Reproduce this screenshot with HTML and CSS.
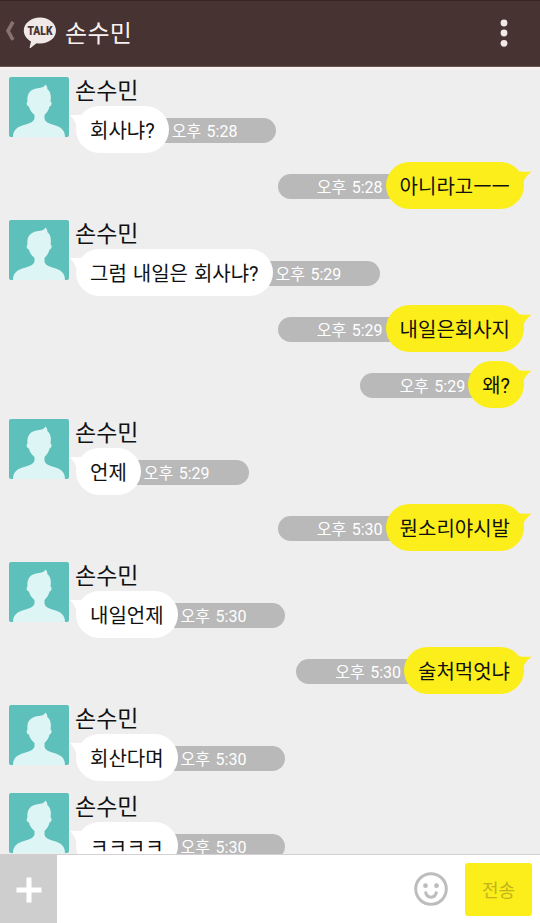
FILE: index.html
```html
<!DOCTYPE html>
<html lang="ko">
<head>
  <meta charset="UTF-8" />
  <title>손수민</title>
  <link rel="stylesheet" href="styles.css">
</head>
<body>

  <!-- shared shapes -->
  <svg width="0" height="0" class="defs">
    <symbol id="person" viewBox="0 0 60 60">
      <path d="M4 60 C4 53 8 50 15 48 C22 46 25.500 44 25.500 41 V38 C22.500 35.500 20.500 32.500 20 29.500 C17.500 29 17 25.500 18.500 24.500 C17.500 16 22 11.500 30 11 C34 10.500 36 9 36.500 7.500 C38 9 38.500 10.500 38.300 12 C41.500 14.500 42.500 19 41.500 24.500 C43.500 25.500 42.500 29 40.500 29.500 C40 32.500 38 35.500 35.500 38 V41 C35.500 44 38 46 45 48 C52 50 56 53 56 60 Z" />
    </symbol>
    <symbol id="tail-left" viewBox="0 0 14 14">
      <path d="M0 1 H14 V14 H7 C6 9 4 5 0 1 Z" />
    </symbol>
    <symbol id="tail-right" viewBox="0 0 16 14">
      <path d="M0 0 C4 2 10 2 15.500 1.500 C12 5 9 7 7.500 12 H0 Z" />
    </symbol>
  </svg>

  <header>
    <svg class="back" width="10" height="20" viewBox="0 0 10 20"><path d="M8 .8 L3 9.800 L8 18.800" /></svg>
    <svg class="logo" width="34" height="32" viewBox="0 0 34 32">
      <path d="M17 .5 C26 .5 33 6.500 33 13.500 C33 21 26 26.500 17 26.500 C15.500 26.500 14.500 26.400 13.500 26.200 L7.500 31 C7 31.300 6.500 31 6.600 30.500 L8 24.500 C3.500 22 .8 18 .8 13.500 C.8 6.500 8 .5 17 .5 Z" />
      <text x="17" y="18" textLength="25" lengthAdjust="spacingAndGlyphs">TALK</text>
    </svg>
    <h1>손수민</h1>
    <svg class="more" width="8" height="28" viewBox="0 0 8 28">
      <circle cx="4" cy="4" r="3.400" /><circle cx="4" cy="14" r="3.400" /><circle cx="4" cy="24.300" r="3.400" />
    </svg>
  </header>

  <main>
    <div class="msg in">
      <div class="avatar"><svg><use href="#person" /></svg></div>
      <div class="content">
        <p class="name">손수민</p>
        <div class="line">
          <div class="bubble">회사냐?<svg class="tail"><use href="#tail-left" /></svg></div>
          <span class="time">오후 5:28</span>
        </div>
      </div>
    </div>

    <div class="msg out">
      <div class="line">
        <span class="time">오후 5:28</span>
        <div class="bubble">아니라고ㅡㅡ<svg class="tail"><use href="#tail-right" /></svg></div>
      </div>
    </div>

    <div class="msg in">
      <div class="avatar"><svg><use href="#person" /></svg></div>
      <div class="content">
        <p class="name">손수민</p>
        <div class="line">
          <div class="bubble">그럼 내일은 회사냐?<svg class="tail"><use href="#tail-left" /></svg></div>
          <span class="time">오후 5:29</span>
        </div>
      </div>
    </div>

    <div class="msg out">
      <div class="line">
        <span class="time">오후 5:29</span>
        <div class="bubble">내일은회사지<svg class="tail"><use href="#tail-right" /></svg></div>
      </div>
    </div>

    <div class="msg out">
      <div class="line">
        <span class="time">오후 5:29</span>
        <div class="bubble">왜?<svg class="tail"><use href="#tail-right" /></svg></div>
      </div>
    </div>

    <div class="msg in">
      <div class="avatar"><svg><use href="#person" /></svg></div>
      <div class="content">
        <p class="name">손수민</p>
        <div class="line">
          <div class="bubble">언제<svg class="tail"><use href="#tail-left" /></svg></div>
          <span class="time">오후 5:29</span>
        </div>
      </div>
    </div>

    <div class="msg out">
      <div class="line">
        <span class="time">오후 5:30</span>
        <div class="bubble">뭔소리야시발<svg class="tail"><use href="#tail-right" /></svg></div>
      </div>
    </div>

    <div class="msg in">
      <div class="avatar"><svg><use href="#person" /></svg></div>
      <div class="content">
        <p class="name">손수민</p>
        <div class="line">
          <div class="bubble">내일언제<svg class="tail"><use href="#tail-left" /></svg></div>
          <span class="time">오후 5:30</span>
        </div>
      </div>
    </div>

    <div class="msg out">
      <div class="line">
        <span class="time">오후 5:30</span>
        <div class="bubble">술처먹엇냐<svg class="tail"><use href="#tail-right" /></svg></div>
      </div>
    </div>

    <div class="msg in">
      <div class="avatar"><svg><use href="#person" /></svg></div>
      <div class="content">
        <p class="name">손수민</p>
        <div class="line">
          <div class="bubble">회산다며<svg class="tail"><use href="#tail-left" /></svg></div>
          <span class="time">오후 5:30</span>
        </div>
      </div>
    </div>

    <div class="msg in">
      <div class="avatar"><svg><use href="#person" /></svg></div>
      <div class="content">
        <p class="name">손수민</p>
        <div class="line">
          <div class="bubble">ㅋㅋㅋㅋ<svg class="tail"><use href="#tail-left" /></svg></div>
          <span class="time">오후 5:30</span>
        </div>
      </div>
    </div>
  </main>

  <footer>
    <button class="plus"><svg width="26" height="26" viewBox="0 0 26 26"><path d="M13 .5 V25.500 M.5 13 H25.500" /></svg></button>
    <div class="input"></div>
    <svg class="emoji" width="34" height="34" viewBox="0 0 34 34">
      <circle class="face" cx="17" cy="17" r="15.300" />
      <circle cx="11.500" cy="13.700" r="2.400" /><circle cx="22.500" cy="13.700" r="2.400" />
      <path d="M11.500 19.500 C12.500 27 21.500 27 22.500 19.500" />
    </svg>
    <button class="send">전송</button>
  </footer>

</body>
</html>
```
FILE: styles.css
```css
* {
  box-sizing: border-box;
}
body {
  margin: 0;
  height: 923px;
  display: flex;
  flex-direction: column;
  overflow: hidden;
  background: #eeeeee;
  font-family: Roboto, "Noto Sans CJK KR", sans-serif;
  color: #111;
}
.defs {
  position: absolute;
}
header {
  height: 67px;
  flex: none;
  display: flex;
  align-items: center;
  padding: 0 32px 0 5px;
  background: #473331;
  border-top: 1px solid #382725;
  border-bottom: 1px solid #6b5553;
}
.back {
  margin-top: -5px;
}
.back path {
  fill: none;
  stroke: #87726f;
  stroke-width: 3.6;
}
.logo {
  margin: -1px 0 0 8px;
  fill: #f1e9e7;
}
.logo text {
  font: 900 12px Roboto, sans-serif;
  text-anchor: middle;
  fill: #473331;
}
h1 {
  flex: 1;
  margin: 0 0 0 8px;
  font-size: 24px;
  font-weight: 400;
  line-height: 36px;
  letter-spacing: 0.3px;
  color: #f8f1ef;
}
.more {
  margin-top: -1px;
  fill: #f1e9e7;
}
main {
  flex: 1;
  min-height: 0;
  overflow: hidden;
  padding: 7px 16px 0 9px;
  border-top: 3px solid #f6f1ef;
}
.msg {
  display: flex;
}
.out {
  justify-content: flex-end;
}
.in + .out, .out + .out {
  margin-top: 9px;
}
.out + .in {
  margin-top: 11px;
}
.in + .in {
  margin-top: 12px;
}
.avatar {
  width: 60px;
  height: 60px;
  flex: none;
  border-radius: 2px;
  background: #5dc0bb;
  overflow: hidden;
}
.avatar svg {
  display: block;
  width: 60px;
  height: 60px;
  fill: #def5f5;
}
.content {
  margin-left: 7px;
}
.name {
  margin: 0 0 0 -1px;
  height: 29px;
  font-size: 23px;
  line-height: 29px;
}
.line {
  display: flex;
  align-items: center;
}
.bubble {
  position: relative;
  height: 47px;
  padding: 0 14px;
  border-radius: 24px;
  font-size: 20px;
  line-height: 51px;
  word-spacing: 1px;
  white-space: nowrap;
  z-index: 1;
}
.in .bubble {
  background: #fff;
}
.out .bubble {
  background: #fbee1a;
}
.tail {
  position: absolute;
  top: 8px;
}
.in .tail {
  left: -6px;
  width: 14px;
  height: 14px;
  fill: #fff;
}
.out .tail {
  right: -8px;
  width: 16px;
  height: 14px;
  fill: #fbee1a;
}
.time {
  height: 25px;
  margin-top: 2px;
  background: #b9b9b9;
  color: #fff;
  font-size: 16px;
  line-height: 27px;
  word-spacing: 1.5px;
  white-space: nowrap;
}
.in .time {
  margin-left: -20px;
  padding: 0 39px 0 23px;
  border-radius: 0 13px 13px 0;
}
.out .time {
  margin-right: -20px;
  padding: 0 23px 0 39px;
  border-radius: 13px 0 0 13px;
}
footer {
  height: 69px;
  flex: none;
  display: flex;
  align-items: center;
  padding-right: 8px;
  background: #fff;
  border-top: 1px solid #d3cfd3;
}
button {
  border: none;
  padding: 0;
  font-family: inherit;
}
.plus {
  width: 57px;
  height: 68px;
  padding-top: 4px;
  background: #cecece;
}
.plus path {
  stroke: #fff;
  stroke-width: 5;
}
.input {
  flex: 1;
}
.emoji {
  margin-right: 17px;
  fill: #bdbdbd;
}
.emoji .face, .emoji path {
  fill: none;
  stroke: #bdbdbd;
  stroke-width: 3;
}
.send {
  width: 67px;
  height: 53px;
  border-radius: 3px;
  background: #fbee1a;
  color: #c2b51c;
  font-size: 18px;
}
```
